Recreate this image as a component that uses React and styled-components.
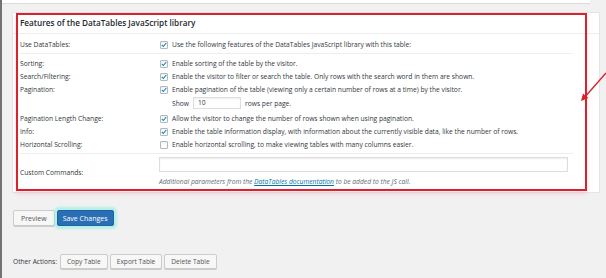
import React from "react";
import styled, { createGlobalStyle } from "styled-components";

const GlobalStyle = createGlobalStyle`
	html,
	body {
		margin: 0;
		padding: 0;
		background: #f1f1f1;
	}

	body {
		font-family: "Open Sans", "Noto Sans", sans-serif;
		color: #32373c;
	}
`;

const Page = styled.div`
	position: relative;
	min-height: 278px;
	border-left: 2px solid #737373;
	background: #f1f1f1;
	overflow: hidden;
`;

const TopBar = styled.div`
	height: 3px;
	margin-right: 16px;
	background: #fff;
	border-bottom: 1px solid #dcdcde;
`;

const Wrap = styled.div`
	padding: 8px 6px 0 10px;
`;

const Postbox = styled.div`
	position: relative;
	background: #fff;
	border: 1px solid #e5e5e5;
`;

const Header = styled.h2`
	margin: 0;
	height: 20px;
	padding-left: 7px;
	font-size: 8.2px;
	font-weight: 600;
	line-height: 20px;
	color: #23282d;
	border-bottom: 1px solid #eee;
`;

const Body = styled.div`
	padding: 0 26px 0 7px;
`;

const Section = styled.div`
	padding: ${(p) => p.$pad || "0"};
	border-bottom: ${(p) => (p.$last ? "none" : "1px solid #eee")};
`;

const Row = styled.div`
	display: grid;
	grid-template-columns: 140px 1fr;
	align-items: center;
	min-height: ${(p) => p.$h || 13}px;
	margin-top: ${(p) => p.$gap || 0}px;
	font-size: 6.7px;
`;

const Label = styled.div`
	color: #32373c;
`;

const Value = styled.div`
	display: flex;
	flex-direction: ${(p) => (p.$column ? "column" : "row")};
	align-items: ${(p) => (p.$column ? "flex-start" : "center")};
	gap: 4px;
	padding-left: ${(p) => p.$indent || 0}px;
`;

const Box = styled.span`
	display: inline-flex;
	align-items: center;
	justify-content: center;
	width: 8px;
	height: 8px;
	box-sizing: border-box;
	border: 1px solid #b4b9be;
	border-radius: 1px;
	background: #fff;
	box-shadow: inset 0 1px 2px rgba(0, 0, 0, 0.08);
	flex: none;
`;

const Checkbox = ({ checked }) => (
	<Box>
		{checked && (
			<svg width="8" height="8" viewBox="0 0 8 8">
				<path d="M1.2 4 L3.1 6 L7 1.4" fill="none" stroke="#1e8cbe" strokeWidth="1.5" />
			</svg>
		)}
	</Box>
);

const SmallInput = styled.div`
	width: 48px;
	height: 12px;
	box-sizing: border-box;
	padding-left: 4px;
	border: 1px solid #ddd;
	box-shadow: inset 0 1px 2px rgba(0, 0, 0, 0.07);
	line-height: 10px;
	color: #32373c;
`;

const WideInput = styled.div`
	width: 409px;
	height: 15px;
	margin-left: -1px;
	box-sizing: border-box;
	border: 1px solid #ddd;
	box-shadow: inset 0 1px 2px rgba(0, 0, 0, 0.07);
`;

const Description = styled.div`
	margin-left: -1px;
	font-style: italic;
	color: #646970;
	line-height: 11px;

	a {
		color: #0073aa;
		text-decoration: underline;
	}
`;

const RedFrame = styled.div`
	position: absolute;
	top: 0;
	left: 3px;
	right: 12px;
	bottom: 1px;
	border: 2px solid #d8232f;
	box-shadow: 0 3px 4px rgba(240, 100, 120, 0.2);
	pointer-events: none;
`;

const ButtonRow = styled.div`
	display: flex;
	align-items: center;
	gap: ${(p) => p.$gap || 2}px;
	margin-top: ${(p) => p.$top}px;
	padding-left: 1px;
	font-size: 6.6px;
`;

const Button = styled.button`
	height: ${(p) => p.$h || 16}px;
	padding: 0 ${(p) => p.$px || 8}px;
	font-family: inherit;
	font-size: ${(p) => p.$fs || 7}px;
	border-radius: 2px;
	border: 1px solid ${(p) => (p.$primary ? "#1e62a0" : "#cccccc")};
	background: ${(p) => (p.$primary ? "#2a6fb5" : "#f7f7f7")};
	color: ${(p) => (p.$primary ? "#fff" : "#555")};
	box-shadow: ${(p) =>
		p.$primary ? "0 0 2px 3px rgba(110, 240, 225, 0.45)" : "0 1px 0 #ccc"};
`;

const ActionsLabel = styled.span`
	margin-right: 1px;
	color: #32373c;
`;

const Arrow = styled.svg`
	position: absolute;
	left: 576px;
	top: 68px;
`;

const rows1 = [
	["Sorting:", true, "Enable sorting of the table by the visitor."],
	[
		"Search/Filtering:",
		true,
		"Enable the visitor to filter or search the table. Only rows with the search word in them are shown.",
	],
	[
		"Pagination:",
		true,
		"Enable pagination of the table (viewing only a certain number of rows at a time) by the visitor.",
	],
];

const rows2 = [
	[
		"Pagination Length Change:",
		true,
		"Allow the visitor to change the number of rows shown when using pagination.",
	],
	[
		"Info:",
		true,
		"Enable the table information display, with information about the currently visible data, like the number of rows.",
	],
	[
		"Horizontal Scrolling:",
		false,
		"Enable horizontal scrolling, to make viewing tables with many columns easier.",
	],
];

const OptionRow = ({ label, checked, text, gap }) => (
	<Row $gap={gap}>
		<Label>{label}</Label>
		<Value>
			<Checkbox checked={checked} />
			<span>{text}</span>
		</Value>
	</Row>
);

const App = () => {
	return (
		<Page>
			<GlobalStyle />
			<TopBar />
			<Wrap>
				<Postbox>
					<Header>Features of the DataTables JavaScript library</Header>
					<Body>
						<Section $pad="4px 0 2px">
							<OptionRow
								label="Use DataTables:"
								checked
								text="Use the following features of the DataTables JavaScript library with this table:"
							/>
						</Section>
						<Section $pad="3px 0 2px">
							{rows1.map(([l, c, t]) => (
								<OptionRow key={l} label={l} checked={c} text={t} />
							))}
							<Row $h={14}>
								<Label />
								<Value $indent={12}>
									<span>Show</span>
									<SmallInput>10</SmallInput>
									<span>rows per page.</span>
								</Value>
							</Row>
							{rows2.map(([l, c, t], i) => (
								<OptionRow key={l} label={l} checked={c} text={t} gap={i === 0 ? 2 : 0} />
							))}
						</Section>
						<Section $pad="3px 0 5px" $last>
							<Row>
								<Label>Custom Commands:</Label>
								<Value $column>
									<WideInput />
									<Description>
										Additional parameters from the <a>DataTables documentation</a> to be
										added to the JS call.
									</Description>
								</Value>
							</Row>
						</Section>
					</Body>
					<RedFrame />
				</Postbox>

				<ButtonRow $top={17}>
					<Button $px={7}>Preview</Button>
					<Button $primary $px={5}>Save Changes</Button>
				</ButtonRow>

				<ButtonRow $top={28} $gap={2}>
					<ActionsLabel>Other Actions:</ActionsLabel>
					<Button $h={15} $px={6} $fs={6.6}>Copy Table</Button>
					<Button $h={15} $px={6} $fs={6.6}>Export Table</Button>
					<Button $h={15} $px={6} $fs={6.6}>Delete Table</Button>
				</ButtonRow>
			</Wrap>

			<Arrow width="30" height="36" viewBox="0 0 30 36">
				<line x1="28" y1="5" x2="6" y2="30" stroke="#d8232f" strokeWidth="1.4" />
				<path d="M3 33 L5 25.5 L10.5 30 Z" fill="#d8232f" />
			</Arrow>
		</Page>
	);
};

export default App;
